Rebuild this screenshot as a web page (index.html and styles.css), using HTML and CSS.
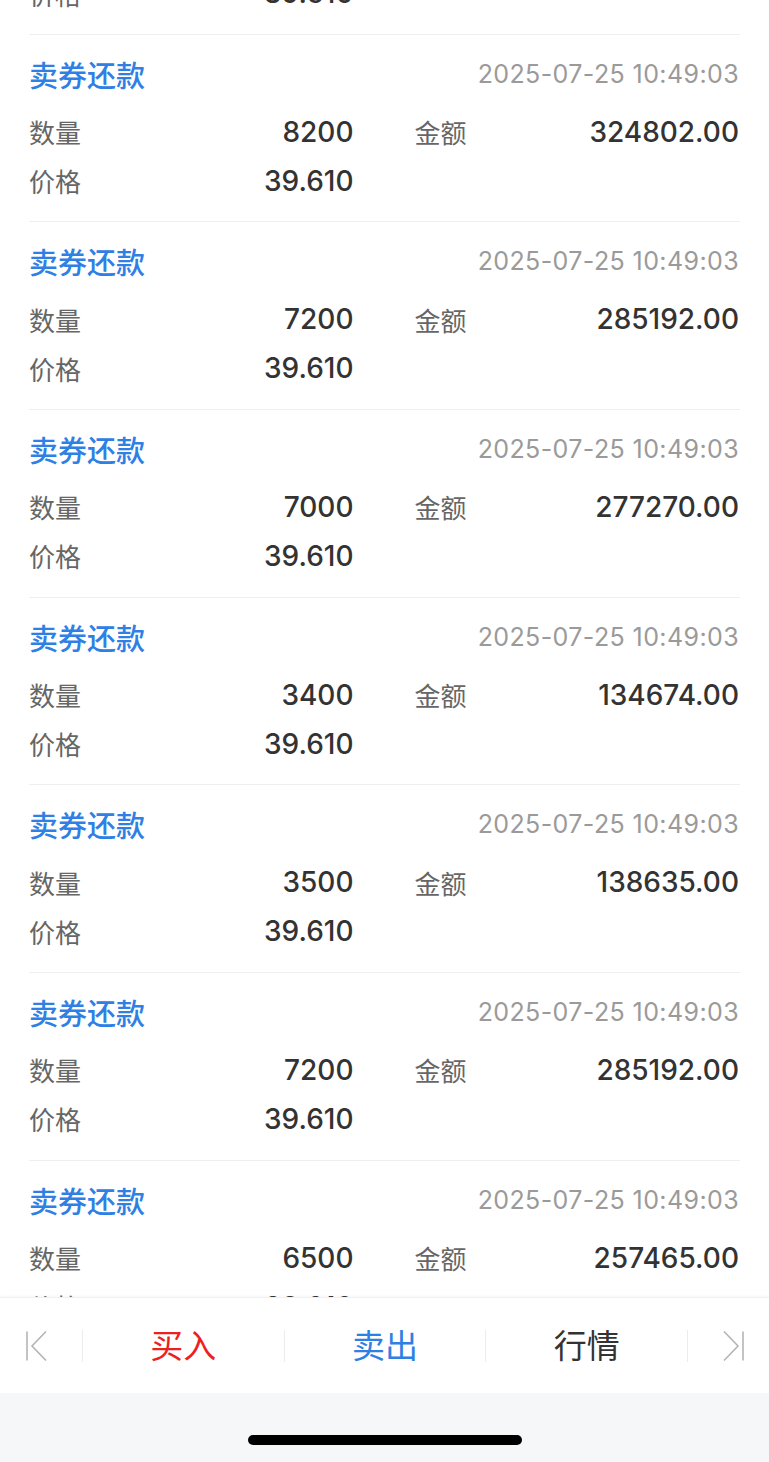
FILE: index.html
```html
<!DOCTYPE html>
<html lang="zh-CN">
<head>
  <meta charset="UTF-8">
  <title>卖券还款</title>
  <link rel="stylesheet" href="styles.css">
</head>
<body>
  <div class="page">
    <div class="viewport">
      <ul class="list">
        <!-- scrolled: only the last row of this record is left on screen -->
        <li class="record partial">
          <div class="grid">
            <div class="cell"><span class="label">价格</span><span class="value">39.610</span></div>
          </div>
        </li>
        <li class="record">
          <div class="record-head"><span class="type">卖券还款</span><span class="time">2025-07-25 10:49:03</span></div>
          <div class="grid">
            <div class="cell"><span class="label">数量</span><span class="value">8200</span></div>
            <div class="cell"><span class="label">金额</span><span class="value">324802.00</span></div>
            <div class="cell"><span class="label">价格</span><span class="value">39.610</span></div>
          </div>
        </li>
        <li class="record">
          <div class="record-head"><span class="type">卖券还款</span><span class="time">2025-07-25 10:49:03</span></div>
          <div class="grid">
            <div class="cell"><span class="label">数量</span><span class="value">7200</span></div>
            <div class="cell"><span class="label">金额</span><span class="value">285192.00</span></div>
            <div class="cell"><span class="label">价格</span><span class="value">39.610</span></div>
          </div>
        </li>
        <li class="record">
          <div class="record-head"><span class="type">卖券还款</span><span class="time">2025-07-25 10:49:03</span></div>
          <div class="grid">
            <div class="cell"><span class="label">数量</span><span class="value">7000</span></div>
            <div class="cell"><span class="label">金额</span><span class="value">277270.00</span></div>
            <div class="cell"><span class="label">价格</span><span class="value">39.610</span></div>
          </div>
        </li>
        <li class="record">
          <div class="record-head"><span class="type">卖券还款</span><span class="time">2025-07-25 10:49:03</span></div>
          <div class="grid">
            <div class="cell"><span class="label">数量</span><span class="value">3400</span></div>
            <div class="cell"><span class="label">金额</span><span class="value">134674.00</span></div>
            <div class="cell"><span class="label">价格</span><span class="value">39.610</span></div>
          </div>
        </li>
        <li class="record">
          <div class="record-head"><span class="type">卖券还款</span><span class="time">2025-07-25 10:49:03</span></div>
          <div class="grid">
            <div class="cell"><span class="label">数量</span><span class="value">3500</span></div>
            <div class="cell"><span class="label">金额</span><span class="value">138635.00</span></div>
            <div class="cell"><span class="label">价格</span><span class="value">39.610</span></div>
          </div>
        </li>
        <li class="record">
          <div class="record-head"><span class="type">卖券还款</span><span class="time">2025-07-25 10:49:03</span></div>
          <div class="grid">
            <div class="cell"><span class="label">数量</span><span class="value">7200</span></div>
            <div class="cell"><span class="label">金额</span><span class="value">285192.00</span></div>
            <div class="cell"><span class="label">价格</span><span class="value">39.610</span></div>
          </div>
        </li>
        <li class="record">
          <div class="record-head"><span class="type">卖券还款</span><span class="time">2025-07-25 10:49:03</span></div>
          <div class="grid">
            <div class="cell"><span class="label">数量</span><span class="value">6500</span></div>
            <div class="cell"><span class="label">金额</span><span class="value">257465.00</span></div>
            <div class="cell"><span class="label">价格</span><span class="value">39.610</span></div>
          </div>
        </li>
      </ul>
    </div>

    <div class="tabbar">
      <div class="tab-icon">
        <svg width="24" height="32" viewBox="0 0 24 32">
          <path d="M2 1.5 V30.5" fill="none" stroke="#b4b4b4" stroke-width="1.6"/>
          <path d="M21 1.5 L7 16 L21 30.5" fill="none" stroke="#b4b4b4" stroke-width="1.6"/>
        </svg>
      </div>
      <div class="tab buy">买入</div>
      <div class="tab sell">卖出</div>
      <div class="tab quote">行情</div>
      <div class="tab-icon last">
        <svg width="24" height="32" viewBox="0 0 24 32">
          <path d="M3 1.5 L17 16 L3 30.5" fill="none" stroke="#b4b4b4" stroke-width="1.6"/>
          <path d="M22 1.5 V30.5" fill="none" stroke="#b4b4b4" stroke-width="1.6"/>
        </svg>
      </div>
    </div>

    <div class="home-area">
      <div class="home-bar"></div>
    </div>
  </div>
</body>
</html>
```

FILE: styles.css
```css
html, body {
  margin: 0;
  padding: 0;
  background: #fff;
}
body {
  font-family: Inter, "Noto Sans CJK SC", sans-serif;
  color: #333;
}
.page {
  height: 100vh;
  display: flex;
  flex-direction: column;
  overflow: hidden;
}
.viewport {
  flex: 1;
  overflow: hidden;
}
.list {
  list-style: none;
  margin: -27px 0 0;
  padding: 0 29px;
}
.record {
  padding: 20px 0 20.67px;
  border-bottom: 1px solid #efefef;
}
.record.partial {
  padding-top: 0;
}
.record.partial .grid {
  margin-top: 0;
}
.record-head {
  display: flex;
  justify-content: space-between;
  align-items: center;
  height: 38px;
}
.type {
  font-size: 29px;
  font-weight: 500;
  color: #2f80e4;
}
.time {
  font-size: 25px;
  color: #9a9a9a;
  letter-spacing: 0.4px;
  margin-right: 1px;
}
.grid {
  display: grid;
  grid-template-columns: 1fr 1fr;
  column-gap: 60px;
  row-gap: 9px;
  margin-top: 19px;
}
.cell {
  display: flex;
  justify-content: space-between;
  align-items: center;
  height: 40px;
}
.label {
  font-size: 26px;
  color: #666;
}
.value {
  font-size: 28px;
  font-weight: 500;
  color: #333;
  margin-right: 1px;
}
.tabbar {
  height: 95px;
  flex-shrink: 0;
  display: flex;
  align-items: center;
  background: #fff;
  border-top: 1px solid #f0f0f0;
  box-shadow: 0 -1px 3px rgba(0,0,0,0.03);
}
.tab-icon {
  width: 82px;
  display: flex;
  justify-content: center;
  padding-right: 8px;
  box-sizing: border-box;
}
.tab-icon.last {
  width: 81px;
  padding-right: 0;
  padding-left: 8px;
}
.tab {
  flex: 1;
  text-align: center;
  font-size: 33px;
  line-height: 32px;
  border-left: 1px solid #ececec;
}
.tab.quote {
  border-right: 1px solid #ececec;
}
.buy {
  color: #ee1f1f;
}
.sell {
  color: #2f80e4;
}
.quote {
  color: #333;
}
.home-area {
  height: 69px;
  flex-shrink: 0;
  background: #f6f7f9;
  display: flex;
  justify-content: center;
  align-items: flex-start;
}
.home-bar {
  width: 274px;
  height: 10px;
  margin-top: 42px;
  border-radius: 5px;
  background: #000;
}
```
